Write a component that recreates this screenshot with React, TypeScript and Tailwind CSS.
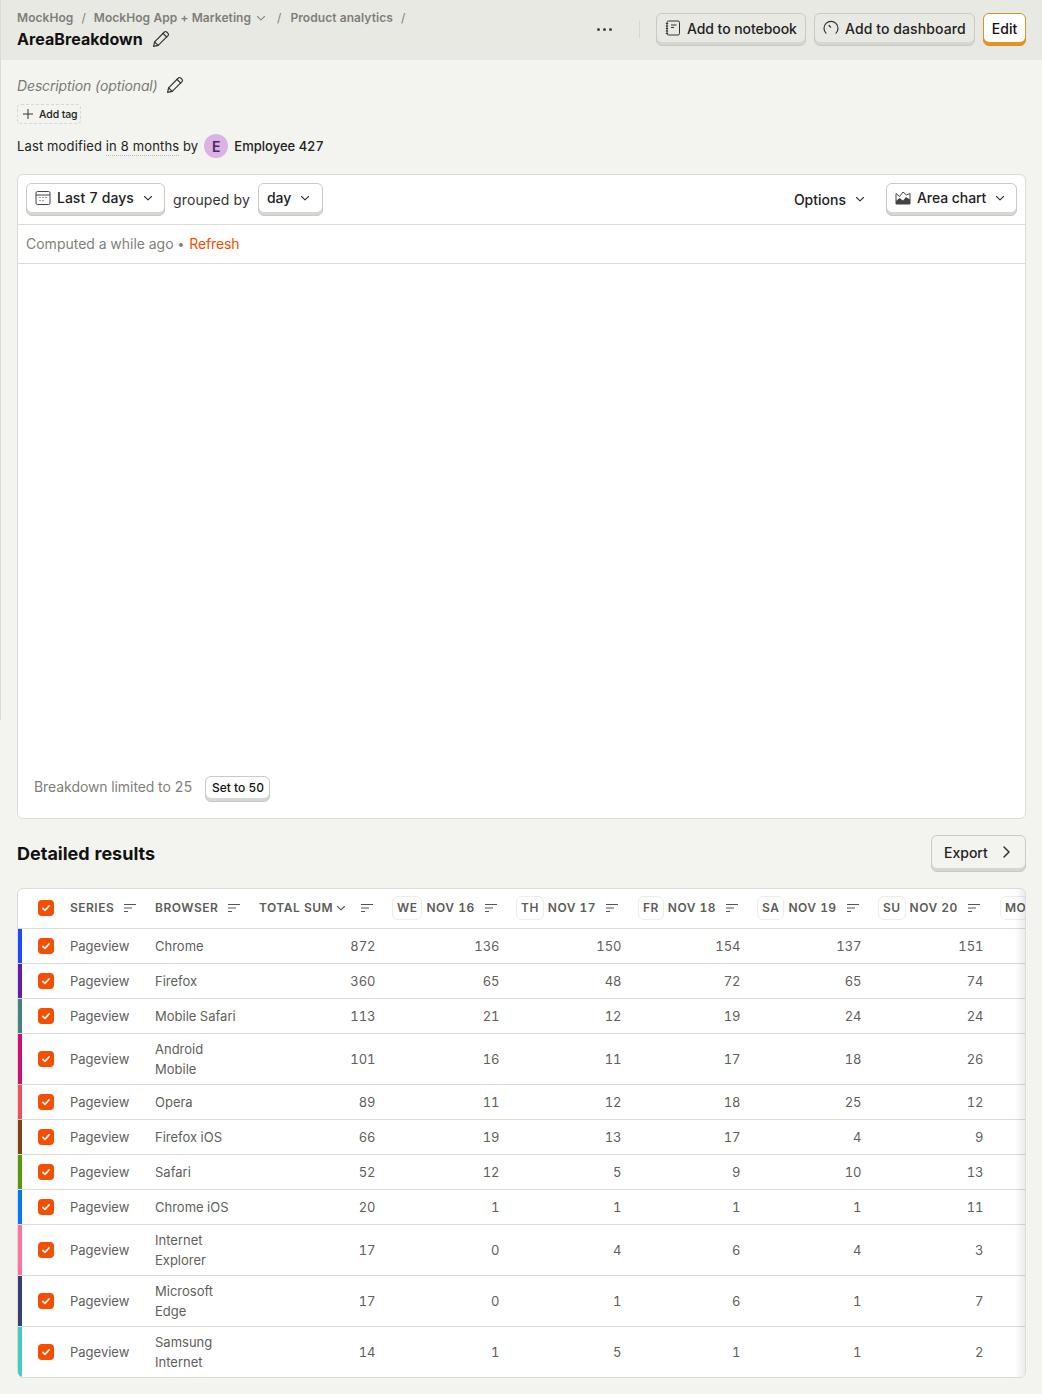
import React from "react";

const Pencil = ({ className = "" }: { className?: string }) => (
  <svg viewBox="0 0 18 18" fill="none" stroke="currentColor" strokeWidth="1.2" strokeLinejoin="round" strokeLinecap="round" className={className}>
    <path d="M1.6 16.4l1-4.6L12.4 2a1.6 1.6 0 0 1 2.3 0l1.3 1.3a1.6 1.6 0 0 1 0 2.3L6.2 15.4z" />
    <path d="M11 3.4L14.6 7M2.6 11.8l3.6 3.6" />
  </svg>
);
const Chev = ({ className = "" }: { className?: string }) => (
  <svg viewBox="0 0 10 10" fill="none" stroke="currentColor" strokeWidth="1.1" strokeLinecap="round" strokeLinejoin="round" className={className}>
    <path d="M1.5 3.5L5 6.8l3.5-3.3" />
  </svg>
);
const Sort = () => (
  <svg viewBox="0 0 12 8" fill="none" stroke="#555" strokeWidth="1" className="w-[12px] h-[8px] shrink-0">
    <path d="M0 .5h12M0 4h8M0 7.5h4" />
  </svg>
);
const Check = () => (
  <span className="flex w-4 h-4 rounded-[4px] bg-[#f54e00] items-center justify-center">
    <svg viewBox="0 0 10 10" fill="none" stroke="#fff" strokeWidth="1.7" strokeLinecap="round" strokeLinejoin="round" className="w-[10px] h-[10px]">
      <path d="M1.8 5.4l2.2 2 4.2-4.6" />
    </svg>
  </span>
);

const Btn = ({ children, face = "bg-white", border = "border-[#c9cac4]", under = "bg-[#d6d6d2]", className = "", h = "h-[33px]" }: any) => (
  <div className={`${h} rounded-[6px] border ${border} ${under} pb-[3px] ${className}`}>
    <div className={`h-full rounded-[5px] ${face} flex items-center`}>{children}</div>
  </div>
);

const cols = [
  { d: "WE", n: "NOV 16" },
  { d: "TH", n: "NOV 17" },
  { d: "FR", n: "NOV 18" },
  { d: "SA", n: "NOV 19" },
  { d: "SU", n: "NOV 20" },
];

const rows: [string, string[], string, number, number, number, number, number][] = [
  ["#1d4aff", ["Chrome"], "872", 136, 150, 154, 137, 151],
  ["#621da6", ["Firefox"], "360", 65, 48, 72, 65, 74],
  ["#42827e", ["Mobile Safari"], "113", 21, 12, 19, 24, 24],
  ["#ce0e74", ["Android", "Mobile"], "101", 16, 11, 17, 18, 26],
  ["#f14f58", ["Opera"], "89", 11, 12, 18, 25, 12],
  ["#7c440e", ["Firefox iOS"], "66", 19, 13, 17, 4, 9],
  ["#529a0a", ["Safari"], "52", 12, 5, 9, 10, 13],
  ["#0476fb", ["Chrome iOS"], "20", 1, 1, 1, 1, 11],
  ["#fe729e", ["Internet", "Explorer"], "17", 0, 4, 6, 4, 3],
  ["#35416b", ["Microsoft", "Edge"], "17", 0, 1, 6, 1, 7],
  ["#41cbc4", ["Samsung", "Internet"], "14", 1, 5, 1, 1, 2],
];

export default function App() {
  return (
    <div className="relative h-[1394px] overflow-hidden bg-[#f3f4ef] text-[#111] tabular-nums font-['Inter',sans-serif]">
      <div className="absolute left-0 top-0 w-px h-[720px] bg-[#dcdcd6]" />
      <header className="h-[60px] bg-[#e9e9e4] pl-[17px] pr-[16px] flex items-start justify-between">
        <div className="pt-[10px]">
          <div className="flex items-center h-[15px] text-[12px] font-semibold text-[#7e7e79] tracking-[0.005em]">
            <span>MockHog</span>
            <span className="mx-[8px] font-normal">/</span>
            <span>MockHog App + Marketing</span>
            <Chev className="w-[10px] h-[10px] ml-[5px] text-[#888]" />
            <span className="ml-[11px] mr-[9px] font-normal">/</span>
            <span>Product analytics</span>
            <span className="ml-[8px] font-normal">/</span>
          </div>
          <div className="flex items-center mt-[4px] h-[20px]">
            <span className="text-[16px] font-bold leading-5 tracking-[0.004em]">AreaBreakdown</span>
            <Pencil className="w-[18px] h-[18px] ml-[9px] text-[#333]" />
          </div>
        </div>
        <div className="flex items-center pt-[13px]">
          <div className="flex gap-[3px] mr-[27px]">
            <span className="w-[3px] h-[3px] rounded-full bg-[#444]" />
            <span className="w-[3px] h-[3px] rounded-full bg-[#444]" />
            <span className="w-[3px] h-[3px] rounded-full bg-[#444]" />
          </div>
          <div className="w-px h-[17px] bg-[#d8d8d3] mr-[16px]" />
          <Btn face="bg-[#e9e9e4]" className="w-[150px]">
            <svg viewBox="0 0 16 16" fill="none" stroke="#333" strokeWidth="1" className="w-4 h-4 ml-[8px] mr-[6px]">
              <rect x="2" y="1" width="12.5" height="14" rx="1.5" />
              <path d="M.8 3.5h2.4M.8 6h2.4M.8 8.5h2.4M.8 11h2.4M.8 13.5h2.4M6 5h5.5M6 7.5h3" />
            </svg>
            <span className="text-[14px] font-medium text-[#222] tracking-[-0.005em]">Add to notebook</span>
          </Btn>
          <Btn face="bg-[#e9e9e4]" className="w-[161px] ml-[8px]">
            <svg viewBox="0 0 16 16" fill="none" stroke="#333" strokeWidth="1.2" strokeLinecap="round" className="w-4 h-4 ml-[8px] mr-[6px]">
              <path d="M3 13.2A7 7 0 1 1 13 13.2" />
              <path d="M6 5.5L7.6 7.2" />
            </svg>
            <span className="text-[14px] font-medium text-[#222] tracking-[0.006em]">Add to dashboard</span>
          </Btn>
          <Btn border="border-[#d5932c]" under="bg-[#e6941f]" className="w-[43px] ml-[8px]">
            <span className="text-[14px] font-medium w-full text-center">Edit</span>
          </Btn>
        </div>
      </header>

      <main className="pl-[17px] pr-[16px]">
        <div className="flex items-center mt-[15px] h-[20px] text-[14px] italic text-[#7a7a75] tracking-[-0.01em]">
          <span>Description (optional)</span>
          <Pencil className="w-[18px] h-[18px] ml-[8px] text-[#333]" />
        </div>
        <div className="mt-[9px] flex items-center h-[20px] w-[64px] border border-dashed border-[#d8d8d3] rounded-[4px] pl-[4px]">
          <svg viewBox="0 0 12 12" stroke="#333" strokeWidth="1" className="w-[12px] h-[12px] mr-[5px]"><path d="M6 1v10M1 6h10" /></svg>
          <span className="text-[10.5px] font-medium text-[#222] tracking-[-0.01em] pt-[1px]">Add tag</span>
        </div>
        <div className="flex items-center mt-[10px] h-[24px] text-[13px] text-[#222]">
          <span className="tracking-[0.012em] pt-[1px]">Last modified&nbsp;</span>
          <span className="tracking-[0.012em] border-b border-dotted border-[#b9b9b4] leading-[17px] pt-[2px]">in 8 months</span>
          <span className="tracking-[0.012em] pt-[1px]">&nbsp;by</span>
          <span className="ml-[6px] w-6 h-6 rounded-full bg-[#dcb1e3] text-[#4a2a5a] text-[14px] font-semibold flex items-center justify-center">E</span>
          <span className="ml-[6px] font-medium pt-[1px]">Employee 427</span>
        </div>

        <section className="mt-[16px] h-[645px] bg-white border border-[#dcdcd6] rounded-[6px] flex flex-col">
          <div className="h-[50px] shrink-0 pl-[8px] pr-[8px] pb-[1px] flex items-center border-b border-[#dcdcd6]">
            <Btn className="w-[139px]">
              <svg viewBox="0 0 16 16" fill="none" stroke="#444" strokeWidth="1" className="w-4 h-4 ml-[8px] mr-[6px]">
                <rect x="1" y="1.5" width="14" height="13" rx="1.5" />
                <path d="M1 5h14" />
                <path d="M4.5 7.5h1M7.5 7.5h1M10.5 7.5h1M4.5 10.5h1M7.5 10.5h1" strokeWidth="1.2" />
              </svg>
              <span className="text-[14px] font-medium text-[#222]">Last 7 days</span>
              <Chev className="w-[10px] h-[10px] ml-[9px] text-[#333]" />
            </Btn>
            <span className="ml-[8px] text-[14px] text-[#333] tracking-[0.01em]">grouped by</span>
            <Btn className="w-[65px] ml-[8px]">
              <span className="text-[14px] font-medium text-[#222] ml-[8px]">day</span>
              <Chev className="w-[10px] h-[10px] ml-[9px] text-[#333]" />
            </Btn>
            <div className="ml-auto flex items-center">
              <span className="text-[14px] font-medium text-[#222]">Options</span>
              <Chev className="w-[10px] h-[10px] ml-[9px] text-[#333]" />
              <Btn className="w-[131px] ml-[21px]">
                <svg viewBox="0 0 16 16" className="w-4 h-4 ml-[8px] mr-[6px]">
                  <path d="M1 14V3.5l3.5 3L8 2l3.5 3 3.5-1.5V14z" fill="none" stroke="#444" strokeWidth="1" strokeLinejoin="round" />
                  <path d="M1 14v-3l3.5-3L8 10.5l3-3.5 4 2.5V14z" fill="#444" />
                </svg>
                <span className="text-[14px] font-medium text-[#222] tracking-[-0.005em]">Area chart</span>
                <Chev className="w-[10px] h-[10px] ml-[9px] text-[#333]" />
              </Btn>
            </div>
          </div>
          <div className="h-[39px] shrink-0 pl-[8px] pb-[1px] flex items-center border-b border-[#dcdcd6] text-[14px] text-[#7f7f7a]">
            <span>Computed a while ago</span>
            <span className="ml-[4px] mr-[5px] text-[12px]">•</span>
            <span className="text-[#f54e00] tracking-[-0.01em]">Refresh</span>
          </div>
          <div className="flex-1" />
          <div className="flex items-start h-[26px] mb-[16px] pl-[16px] text-[14px] text-[#7f7f7a]">
            <span className="leading-[20px] pt-[1px] tracking-[-0.005em]">Breakdown limited to 25</span>
            <Btn h="h-[26px]" className="w-[65px] ml-[13px]">
              <span className="text-[12px] font-medium text-[#111] w-full text-center">Set to 50</span>
            </Btn>
          </div>
        </section>

        <div className="flex items-center justify-between mt-[16px] h-[37px]">
          <h2 className="text-[18px] font-bold">Detailed results</h2>
          <Btn face="bg-[#f3f4ef]" h="h-[37px]" className="w-[95px]">
            <span className="text-[14px] font-medium text-[#222] ml-[12px]">Export</span>
            <svg viewBox="0 0 10 14" fill="none" stroke="#333" strokeWidth="1.5" strokeLinecap="round" strokeLinejoin="round" className="w-[10px] h-[14px] ml-[14px]"><path d="M2 2l5 5-5 5" /></svg>
          </Btn>
        </div>

        <div className="relative mt-[16px] h-[490px] bg-white border border-[#dcdcd6] rounded-[6px] overflow-hidden">
          <table className="table-fixed border-collapse text-[13px] leading-[20px] text-[#5f5f5b] w-[1100px]">
            <colgroup>
              <col className="w-[44px]" />
              <col className="w-[85px]" />
              <col className="w-[104px]" />
              <col className="w-[133px]" />
              <col className="w-[124px]" />
              <col className="w-[122px]" />
              <col className="w-[119px]" />
              <col className="w-[121px]" />
              <col className="w-[122px]" />
              <col className="w-[126px]" />
            </colgroup>
            <thead>
              <tr className="h-[39px] border-b border-[#dcdcd6] text-[12px] font-bold text-[#5c5c58] tracking-[0.04em]">
                <th className="pl-[12px] font-normal"><div className="flex justify-center"><Check /></div></th>
                <th className="pl-[8px] text-left font-semibold">
                  <div className="flex items-center"><span>SERIES</span><span className="ml-[10px]"><Sort /></span></div>
                </th>
                <th className="pl-[8px] text-left font-semibold">
                  <div className="flex items-center"><span>BROWSER</span><span className="ml-[10px]"><Sort /></span></div>
                </th>
                <th className="pl-[8px] text-left font-semibold">
                  <div className="flex items-center whitespace-nowrap"><span>TOTAL SUM</span><Chev className="w-[10px] h-[10px] ml-[3px]" /><span className="ml-[15px]"><Sort /></span></div>
                </th>
                {cols.map((c) => (
                  <th key={c.d} className="pl-[8px] text-left font-semibold">
                    <div className="flex items-center whitespace-nowrap">
                      <span className="border border-[#ecece8] rounded-[6px] h-[24px] px-[4px] flex items-center">{c.d}</span>
                      <span className="ml-[4px]">{c.n}</span>
                      <span className="ml-[10px]"><Sort /></span>
                    </div>
                  </th>
                ))}
                <th className="pl-[8px] text-left font-semibold">
                  <div className="flex items-center"><span className="border border-[#ecece8] rounded-[6px] h-[24px] px-[4px] flex items-center">MO</span></div>
                </th>
              </tr>
            </thead>
            <tbody>
              {rows.map((r, i) => (
                <tr key={i} className={`border-b border-[#dcdcd6] last:border-b-0 ${r[1].length > 1 ? "h-[51px]" : "h-[35px]"}`}>
                  <td className="relative pl-[12px]">
                    <span className="absolute left-0 top-0 bottom-0 w-[4px]" style={{ backgroundColor: r[0] }} />
                    <div className="flex justify-center"><Check /></div>
                  </td>
                  <td className="pl-[8px]">Pageview</td>
                  <td className="pl-[8px]">
                    {r[1].map((t) => (<div key={t}>{t}</div>))}
                  </td>
                  <td className="pr-[8.5px] text-right">{r[2]}</td>
                  {[r[3], r[4], r[5], r[6], r[7]].map((v, j) => (
                    <td key={j} className="pr-[8.5px] text-right">{v}</td>
                  ))}
                  <td />
                </tr>
              ))}
            </tbody>
          </table>
          <div className="absolute right-0 top-0 bottom-0 w-[10px] bg-gradient-to-l from-[#00000014] to-transparent" />
        </div>
      </main>
    </div>
  );
}
